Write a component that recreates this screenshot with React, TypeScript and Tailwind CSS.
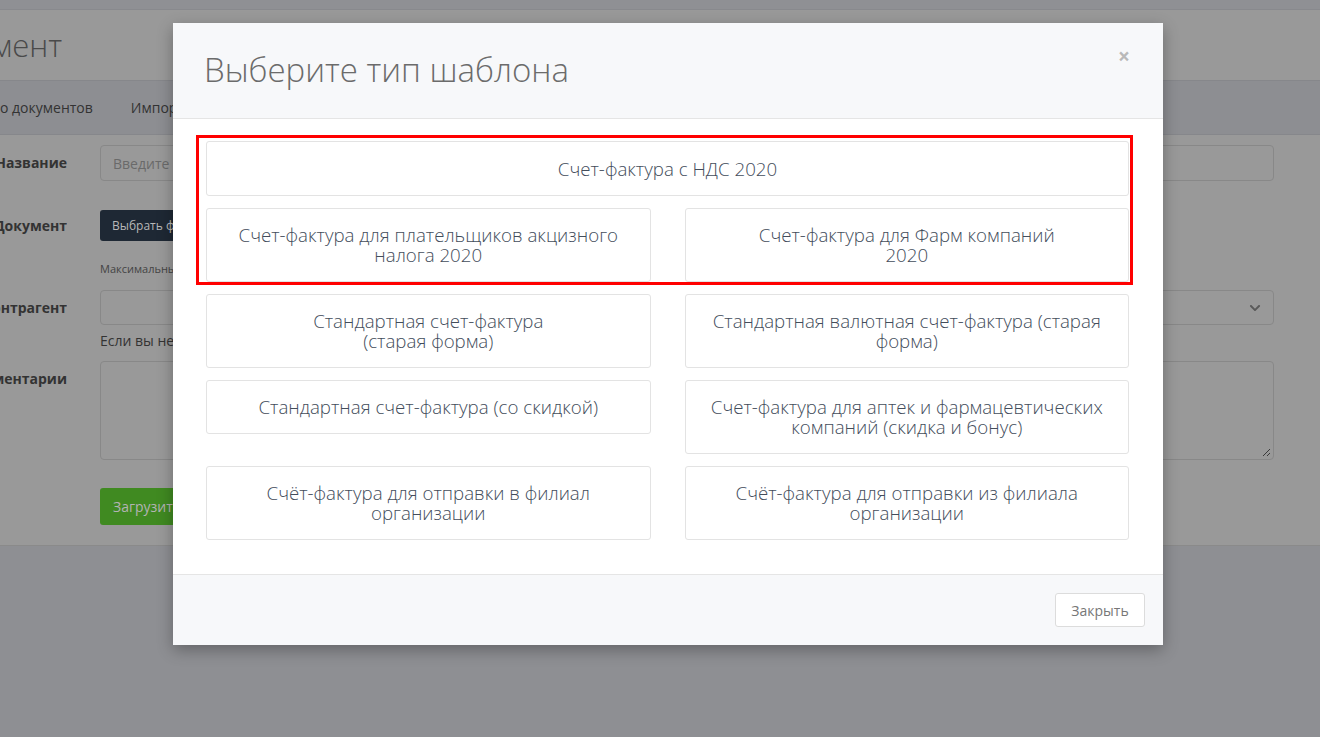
import React from "react";
import { FaChevronDown } from "react-icons/fa";

const items: { text: React.ReactNode; full?: boolean }[] = [
  { text: "Счет-фактура с НДС 2020", full: true },
  { text: <>Счет-фактура для плательщиков акцизного<br />налога 2020</> },
  { text: <>Счет-фактура для Фарм компаний<br />2020</> },
  { text: <>Стандартная счет-фактура<br />(старая форма)</> },
  { text: <>Стандартная валютная счет-фактура (старая<br />форма)</> },
  { text: "Стандартная счет-фактура (со скидкой)" },
  { text: <>Счет-фактура для аптек и фармацевтических<br />компаний (скидка и бонус)</> },
  { text: <>Счёт-фактура для отправки в филиал<br />организации</> },
  { text: <>Счёт-фактура для отправки из филиала<br />организации</> },
];

function Label({ text, top = false }: { text: string; top?: boolean }) {
  return (
    <div className={`w-[100px] shrink-0 flex ${top ? "items-start pt-[8px]" : "items-center"}`}>
      <div className="w-[67px] overflow-hidden flex justify-end">
        <span className="whitespace-nowrap font-bold text-[14px] leading-[20px] text-[#333333]">{text}</span>
      </div>
    </div>
  );
}

export default function App() {
  return (
    <div className="relative w-[1320px] h-[737px] overflow-hidden bg-[#8e8f93] font-['Open_Sans',sans-serif]">
      {/* background page */}
      <div className="h-[10px] bg-[#8f9094] border-b border-[#88898d]" />
      <div className="h-[70px] bg-[#999999] flex items-center">
        <div className="w-[62px] overflow-hidden flex justify-end">
          <span className="whitespace-nowrap text-[31px] font-light text-[#4a4a4a] leading-[44px]">Документ</span>
        </div>
      </div>
      <div className="h-[55px] bg-[#8d8e92] border-y border-[#86878b] flex items-center gap-[38px] text-[14px] text-[#333333]">
        <span className="whitespace-nowrap">о документов</span>
        <span className="whitespace-nowrap">Импорт</span>
      </div>
      <div className="h-[411px] bg-[#999999] border-b border-[#8a8a8a] flex flex-col pt-[10px]">
        <div className="flex h-[36px]">
          <Label text="Название" />
          <div className="w-[1174px] h-[36px] border border-[#888888] rounded-[4px] flex items-center px-[12px] text-[14px] text-[#6a6a6a]">
            Введите название
          </div>
        </div>
        <div className="flex h-[31px] mt-[29px]">
          <Label text="Документ" />
          <div className="h-[31px] px-[12px] rounded-[3px] bg-[#1e2834] flex items-center text-[12px] text-[#b8b8b8] whitespace-nowrap">
            Выбрать файл
          </div>
        </div>
        <div className="flex mt-[20px]">
          <div className="w-[100px] shrink-0" />
          <span className="text-[11px] leading-[16px] text-[#444444]">Максимальный размер файла</span>
        </div>
        <div className="flex h-[35px] mt-[13px]">
          <Label text="Контрагент" />
          <div className="w-[1174px] h-[35px] border border-[#888888] rounded-[4px] flex items-center justify-end pr-[12px]">
            <FaChevronDown className="text-[#595959]" size={12} />
          </div>
        </div>
        <div className="flex mt-[6px]">
          <div className="w-[100px] shrink-0" />
          <span className="text-[14px] leading-[20px] text-[#333333]">Если вы не нашли контрагента</span>
        </div>
        <div className="flex h-[99px] mt-[10px]">
          <Label text="Комментарии" top />
          <div className="relative w-[1174px] h-[99px] border border-[#888888] rounded-[4px]">
            <svg className="absolute right-[2px] bottom-[2px]" width="10" height="10" viewBox="0 0 10 10">
              <path d="M9 2 L2 9 M9 6 L6 9" stroke="#3a3a3a" strokeWidth="1" />
            </svg>
          </div>
        </div>
        <div className="flex h-[37px] mt-[28px]">
          <div className="w-[100px] shrink-0" />
          <div className="h-[37px] px-[13px] rounded-[3px] bg-[#408a21] flex items-center text-[14px] text-[#b3b3b3] whitespace-nowrap">
            Загрузить
          </div>
        </div>
      </div>

      {/* modal */}
      <div className="absolute left-[173px] top-[23px] w-[990px] bg-white shadow-[0_5px_15px_rgba(0,0,0,0.3)]">
        <div className="h-[96px] bg-[#f7f8fa] border-b border-[#e5e5e5] flex items-center justify-between pl-[31px] pr-[33px]">
          <h4 className="text-[33px] font-light text-[#6b6b6b] leading-none -mt-[2px]">Выберите тип шаблона</h4>
          <span className="text-[21px] font-bold text-[#b9b9b9] leading-none -mt-[28px]">×</span>
        </div>
        <div className="pt-[22px] pl-[33px] pr-[34px] pb-[34px] grid grid-cols-2 gap-x-[34px] gap-y-[12px] items-start">
          {items.map((it, i) => (
            <div
              key={i}
              className={`${it.full ? "col-span-2 h-[55px] flex items-center justify-center" : "py-4"} border border-[#e3e3e3] rounded-[3px] bg-white px-3 text-center text-[18.7px] leading-[20px] font-light text-[#434d5b]`}
            >
              {it.text}
            </div>
          ))}
        </div>
        <div className="h-[71px] bg-[#f7f8fa] border-t border-[#e5e5e5] flex justify-end items-start pt-[18px] pr-[18px]">
          <div className="w-[90px] h-[34px] border border-[#dcdcdc] rounded-[3px] bg-white flex items-center justify-center text-[14px] text-[#777777]">
            Закрыть
          </div>
        </div>
      </div>

      {/* red annotation */}
      <div className="absolute left-[196px] top-[135px] w-[937px] h-[150px] border-[3px] border-[#ff0000] pointer-events-none" />
    </div>
  );
}
